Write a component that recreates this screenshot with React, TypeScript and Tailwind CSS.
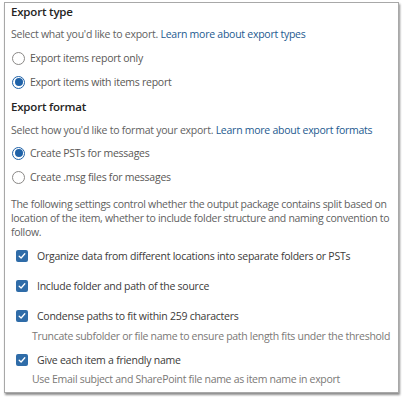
import React from "react";

function Radio({ checked, label, className }: { checked?: boolean; label: string; className: string }) {
  return (
    <div className={`flex items-center h-[20px] ${className}`}>
      <div className="ml-[1px] w-[13px] h-[13px] rounded-full border border-[#8a8886] flex items-center justify-center shrink-0" style={checked ? { borderColor: "#1f62a8" } : undefined}>
        {checked && <div className="w-[8px] h-[8px] rounded-full bg-[#1f62a8]" />}
      </div>
      <span className="ml-[5px] text-[#5a5856]">{label}</span>
    </div>
  );
}

function Check({ label, className }: { label: string; className: string }) {
  return (
    <div className={`flex items-center h-[20px] ${className}`}>
      <div className="ml-[5px] w-[12px] h-[12px] rounded-[2px] bg-[#2f6ca8] flex items-center justify-center shrink-0">
        <svg width="8" height="8" viewBox="0 0 8 8" fill="none">
          <path d="M1.2 4.2 L3.1 6 L6.8 1.8" stroke="white" strokeWidth="1.3" strokeLinecap="round" strokeLinejoin="round" />
        </svg>
      </div>
      <span className="ml-[9px] text-[#3b3a39]">{label}</span>
    </div>
  );
}

export default function App() {
  return (
    <div className="w-[404px] h-[400px] bg-white text-[10.5px] tracking-[-0.25px] text-[#616161]" style={{ fontFamily: '"Open Sans", "Noto Sans", sans-serif' }}>
      <div className="ml-[4px] pt-[2px]">
        <div className="w-[395px] h-[391px] border border-[#a8a8a8] shadow-[1px_2px_2px_rgba(0,0,0,0.45)] pl-[6px] pr-[2px] flex flex-col leading-[16px]">
          <div className="mt-[1px] h-[16px] font-semibold text-[11.5px] tracking-[-0.2px] text-[#252423]">Export type</div>
          <div className="mt-[6px] h-[16px] whitespace-nowrap">
            Select what you'd like to export. <span className="text-[#1d5a8f]">Learn more about export types</span>
          </div>
          <Radio className="mt-[6px]" label="Export items report only" />
          <Radio className="mt-[4px]" checked label="Export items with items report" />
          <div className="mt-[7px] h-[16px] font-semibold text-[11.5px] tracking-[-0.2px] text-[#252423]">Export format</div>
          <div className="mt-[7px] h-[16px] whitespace-nowrap">
            Select how you'd like to format your export. <span className="text-[#1d5a8f]">Learn more about export formats</span>
          </div>
          <Radio className="mt-[5px]" checked label="Create PSTs for messages" />
          <Radio className="mt-[4px]" label="Create .msg files for messages" />
          <div className="mt-[10px] leading-[14px] tracking-[-0.3px]">
            The following settings control whether the output package contains split based on location of the item, whether to include folder structure and naming convention to follow.
          </div>
          <Check className="mt-[7px]" label="Organize data from different locations into separate folders or PSTs" />
          <Check className="mt-[10px]" label="Include folder and path of the source" />
          <Check className="mt-[10px]" label="Condense paths to fit within 259 characters" />
          <div className="mt-[2px] h-[16px] pl-[21px] whitespace-nowrap tracking-[-0.3px] text-[#7a7876]">Truncate subfolder or file name to ensure path length fits under the threshold</div>
          <Check className="mt-[6px]" label="Give each item a friendly name" />
          <div className="mt-[1px] h-[16px] pl-[21px] whitespace-nowrap tracking-[-0.3px] text-[#7a7876]">Use Email subject and SharePoint file name as item name in export</div>
        </div>
      </div>
    </div>
  );
}
